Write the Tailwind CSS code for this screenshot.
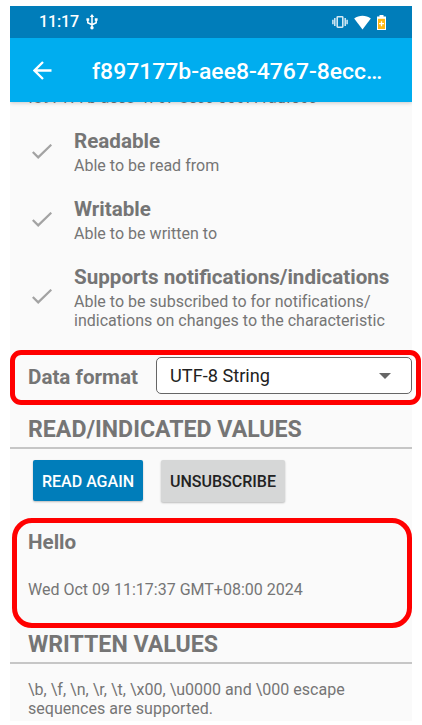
<!DOCTYPE html>
<html lang="en">
<head>
<meta charset="utf-8">
<title>Characteristic</title>
<script src="https://cdn.jsdelivr.net/npm/@tailwindcss/browser@4"></script>
</head>
<body class="bg-white">
<div class="relative w-[422px] h-[725px] overflow-hidden pt-[6px] pl-[10px] font-['Roboto',sans-serif] text-[#757575]">
  <main class="w-[402px] h-[715px] bg-[#fafafa] overflow-hidden flex flex-col">
    <header class="shrink-0 relative z-10 shadow-[0_1px_4px_rgba(0,0,0,0.2)]">
      <div class="h-8 bg-[#007dba] text-white flex items-center pl-[29px] pr-[26px]">
        <span class="text-[16px] font-medium tracking-[-0.1px]">11:17</span>
        <svg class="ml-[7px] w-[12px] h-[16px]" viewBox="0 0 12 16" fill="none" stroke="#fff" stroke-width="1.5"><path d="M6 2v11M1.800 5.500v3.200l4.200 2M10.200 5.500v3.200l-4.200 2"/><path d="M6 0l2.200 3H3.800zM.4 4.300h2.800v2.400H.4zM8.800 4.300h2.800v2.400H8.800z" fill="#fff" stroke="none"/><circle cx="6" cy="13.700" r="1.700" fill="#fff" stroke="none"/></svg>
        <div class="ml-auto flex items-center">
          <svg class="w-[16px] h-[14px]" viewBox="0 0 16 14" fill="none" stroke="#d4e9f4"><rect x="5.200" y="1.800" width="5.600" height="10.400" rx=".6" stroke-width="1.600"/><path d="M2.800 3v8M13.200 3v8M.9 4.800v4.400M15.100 4.800v4.400" stroke-width="1.500"/></svg>
          <svg class="ml-[6px] w-[17px] h-[15px]" viewBox="0 0 17 15"><path d="M.2 3.500C5 -.3 12 -.3 16.800 3.500L8.500 14.500z" fill="#fff"/></svg>
          <svg class="ml-[6px] w-[9px] h-[15px]" viewBox="0 0 9 15"><path d="M2.500 0h4v1.500H9V15H0V1.500h2.500z" fill="#fff"/><path d="M1 3.800h7V14H1z" fill="#fdb813"/><path d="M4.500 6.200v5M2 8.700h5" stroke="#fff" stroke-width="1.300"/></svg>
        </div>
      </div>
      <div class="h-16 bg-[#00adef] text-white flex items-center pl-[23px]">
        <svg class="w-[19px] h-[19px] shrink-0" viewBox="0 0 19 19" fill="none" stroke="#fff" stroke-width="2.300"><path d="M18.500 9.500H2M10 1L1.500 9.500l8.500 8.500"/></svg>
        <h1 class="ml-[40px] mt-[4px] text-[22.950px] font-medium whitespace-nowrap">f897177b-aee8-4767-8ecc…</h1>
      </div>
    </header>
    <div class="shrink-0 h-[27px] pl-[18px]"><p class="-mt-[14px] text-[16px] leading-[19px] tracking-[-0.05px] whitespace-nowrap">f897177b-aee8-4767-8ecc-5567f1adfe6c</p></div>
    <section class="shrink-0 pl-[22px]">
      <div class="h-[68px] flex">
        <svg class="w-[20px] h-[15px] mt-[15px] shrink-0" viewBox="0 0 20 15" fill="none" stroke="#a3a3a3" stroke-width="2.200"><path d="M.8 8l5.400 5.400L19.300 .7"/></svg>
        <div class="ml-[22px] whitespace-nowrap"><h2 class="text-[20.600px] leading-[24px] font-bold">Readable</h2><p class="mt-[3px] text-[16px] leading-[19px] tracking-[0.02px]">Able to be read from</p></div>
      </div>
      <div class="h-[68px] flex">
        <svg class="w-[20px] h-[15px] mt-[14.500px] shrink-0" viewBox="0 0 20 15" fill="none" stroke="#a3a3a3" stroke-width="2.200"><path d="M.8 8l5.400 5.400L19.300 .7"/></svg>
        <div class="ml-[22px] whitespace-nowrap"><h2 class="text-[20.600px] leading-[24px] font-bold">Writable</h2><p class="mt-[3px] text-[16px] leading-[19px] tracking-[0.02px]">Able to be written to</p></div>
      </div>
      <div class="h-[80px] flex">
        <svg class="w-[20px] h-[15px] mt-[24px] shrink-0" viewBox="0 0 20 15" fill="none" stroke="#a3a3a3" stroke-width="2.200"><path d="M.8 8l5.400 5.400L19.300 .7"/></svg>
        <div class="ml-[22px] whitespace-nowrap"><h2 class="text-[20.600px] leading-[24px] font-bold">Supports notifications/indications</h2><p class="mt-[3px] text-[16px] leading-[19px] tracking-[0.02px]">Able to be subscribed to for notifications/<br>indications on changes to the characteristic</p></div>
      </div>
    </section>
    <section class="shrink-0 h-[62px] pl-[18px] flex items-center">
      <h2 class="w-[128px] text-[20.600px] font-bold whitespace-nowrap mt-[2px]">Data format</h2>
      <div class="w-[256px] h-[37px] rounded-[5px] border border-[#666] bg-white flex items-center pl-[13px] pr-[20px] text-[18.200px] text-[#222] -mt-[1px]">
        <span>UTF-8 String</span>
        <svg class="ml-auto w-[12px] h-[6px]" viewBox="0 0 12 6"><path d="M0 0h12L6 6z" fill="#666"/></svg>
      </div>
    </section>
    <h2 class="shrink-0 h-[42px] pl-[18px] pt-[9px] border-b-2 border-[#c6c6c6] text-[23.150px] leading-[28px] font-bold">READ/INDICATED VALUES</h2>
    <div class="shrink-0 h-[71px] pl-[23px] pt-[11px] flex gap-[18px] text-[16px] font-medium">
      <button class="w-[110px] h-[41px] rounded-[2px] bg-[#007dba] text-white pt-[2px] shadow-[0_1px_2px_rgba(0,0,0,0.25)]">READ AGAIN</button>
      <button class="w-[124px] h-[42px] rounded-[2px] bg-[#d6d7d7] text-[#222] pt-px shadow-[0_1px_2px_rgba(0,0,0,0.25)]">UNSUBSCRIBE</button>
    </div>
    <section class="shrink-0 h-[105px] pl-[18px] pt-[10px]">
      <h2 class="text-[20.600px] leading-[24px] font-bold">Hello</h2>
      <p class="mt-[26px] text-[16px] leading-[19px]">Wed Oct 09 11:17:37 GMT+08:00 2024</p>
    </section>
    <h2 class="shrink-0 h-[39px] pl-[18px] pt-[6px] border-b-2 border-[#c6c6c6] text-[23.150px] leading-[28px] font-bold">WRITTEN VALUES</h2>
    <p class="shrink-0 pl-[18px] pt-[16px] text-[16px] leading-[19px] tracking-[0.02px]">\b, \f, \n, \r, \t, \x00, \u0000 and \000 escape<br>sequences are supported.</p>
  </main>
  <div class="absolute z-20 left-[10px] top-[350px] w-[411px] h-[55px] border-[5px] border-[#f00] rounded-[11px]"></div>
  <div class="absolute z-20 left-[12px] top-[518px] w-[400px] h-[110px] border-[5px] border-[#f00] rounded-[20px]"></div>
</div>
</body>
</html>
